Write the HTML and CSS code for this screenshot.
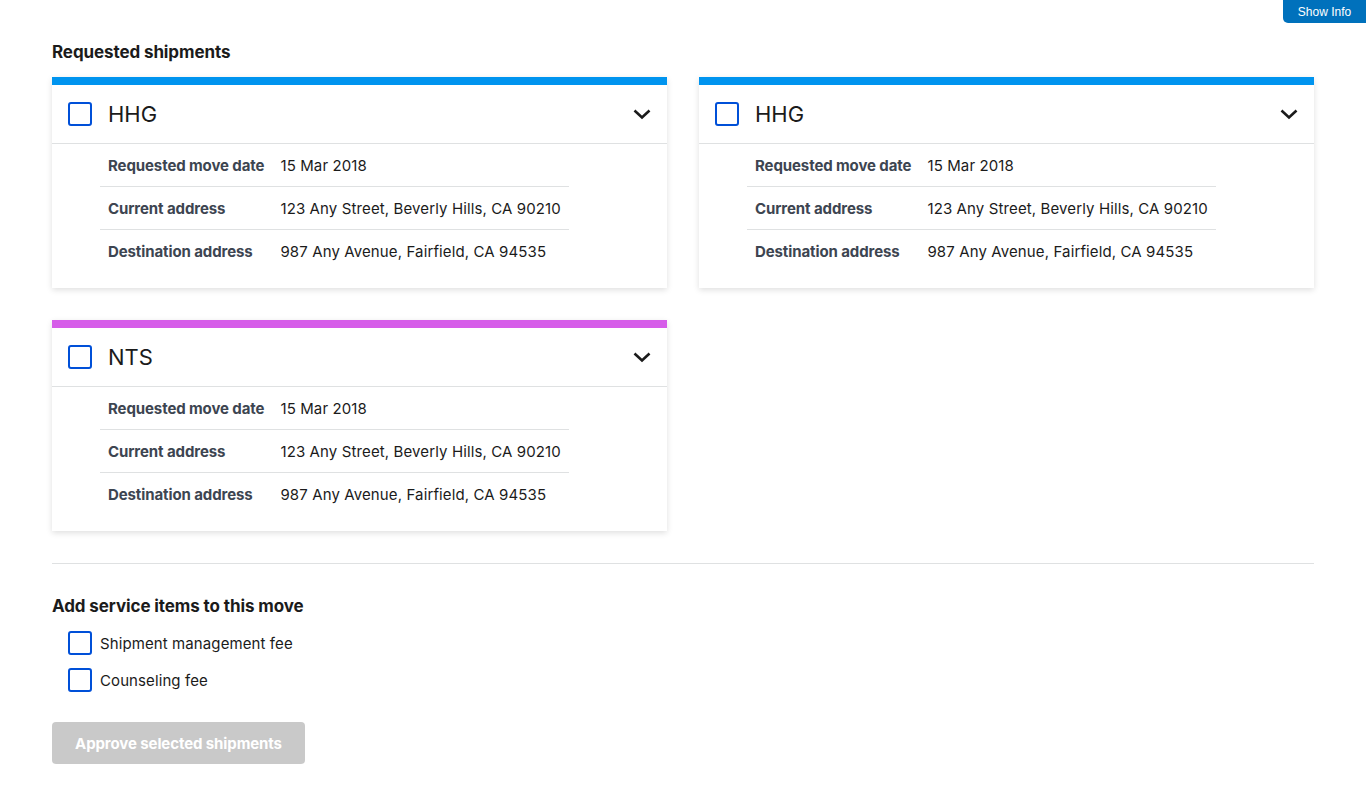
FILE: index.html
```html
<!DOCTYPE html>
<html lang="en">
<head>
<meta charset="utf-8">
<title>Requested shipments</title>
<link rel="stylesheet" href="styles.css">
</head>
<body>
<button class="show-info">Show Info</button>
<main class="page">
  <h2 class="section-title">Requested shipments</h2>
  <div class="cards">
    <section class="card card-hhg">
      <header class="card-head">
        <span class="checkbox"></span>
        <span class="card-title">HHG</span>
        <svg class="chevron" viewBox="0 0 18 12" width="18" height="12"><path d="M1.5 2.5 L9 9.5 L16.5 2.5" fill="none" stroke="#1b1b1b" stroke-width="2.6"/></svg>
      </header>
      <table class="details">
        <tr><th>Requested move date</th><td>15 Mar 2018</td></tr>
        <tr><th>Current address</th><td>123 Any Street, Beverly Hills, CA 90210</td></tr>
        <tr><th>Destination address</th><td>987 Any Avenue, Fairfield, CA 94535</td></tr>
      </table>
    </section>
    <section class="card card-hhg">
      <header class="card-head">
        <span class="checkbox"></span>
        <span class="card-title">HHG</span>
        <svg class="chevron" viewBox="0 0 18 12" width="18" height="12"><path d="M1.5 2.5 L9 9.5 L16.5 2.5" fill="none" stroke="#1b1b1b" stroke-width="2.6"/></svg>
      </header>
      <table class="details">
        <tr><th>Requested move date</th><td>15 Mar 2018</td></tr>
        <tr><th>Current address</th><td>123 Any Street, Beverly Hills, CA 90210</td></tr>
        <tr><th>Destination address</th><td>987 Any Avenue, Fairfield, CA 94535</td></tr>
      </table>
    </section>
    <section class="card card-nts">
      <header class="card-head">
        <span class="checkbox"></span>
        <span class="card-title">NTS</span>
        <svg class="chevron" viewBox="0 0 18 12" width="18" height="12"><path d="M1.5 2.5 L9 9.5 L16.5 2.5" fill="none" stroke="#1b1b1b" stroke-width="2.6"/></svg>
      </header>
      <table class="details">
        <tr><th>Requested move date</th><td>15 Mar 2018</td></tr>
        <tr><th>Current address</th><td>123 Any Street, Beverly Hills, CA 90210</td></tr>
        <tr><th>Destination address</th><td>987 Any Avenue, Fairfield, CA 94535</td></tr>
      </table>
    </section>
  </div>
  <hr class="divider">
  <h2 class="section-title service-title">Add service items to this move</h2>
  <ul class="service-list">
    <li class="service-item"><span class="checkbox"></span><span>Shipment management fee</span></li>
    <li class="service-item"><span class="checkbox"></span><span>Counseling fee</span></li>
  </ul>
  <button class="approve" disabled>Approve selected shipments</button>
</main>
</body>
</html>
```
FILE: styles.css
```css
html, body {
  margin: 0;
  padding: 0;
  background: #fff;
}
body {
  font-family: "Inter", "Open Sans", sans-serif;
  color: #1b1b1b;
  position: relative;
}
.show-info {
  position: absolute;
  top: 0;
  right: 0;
  width: 83px;
  height: 23px;
  border: 0;
  border-radius: 0 0 0 5px;
  background: #0071bc;
  color: #fff;
  font-family: "Liberation Sans", Arial, sans-serif;
  font-size: 12px;
  padding: 0;
}
.page {
  padding: 41px 52px 40px;
}
.section-title {
  margin: 0;
  font-size: 17px;
  font-weight: 700;
  line-height: 22px;
  letter-spacing: -0.1px;
}
.cards {
  margin-top: 14px;
  display: grid;
  grid-template-columns: 615px 615px;
  column-gap: 32px;
  row-gap: 32px;
}
.card {
  background: #fff;
  box-shadow: 0 2px 6px rgba(0,0,0,0.13);
  border-top: 8px solid #0094ef;
  padding-bottom: 16px;
}
.card-nts {
  border-top-color: #d65de9;
}
.card-head {
  display: flex;
  align-items: center;
  height: 58px;
  padding: 0 16px;
  border-bottom: 1px solid #dfe1e2;
}
.checkbox {
  display: inline-block;
  box-sizing: border-box;
  width: 24px;
  height: 24px;
  border: 2px solid #0050d8;
  border-radius: 3px;
  flex: none;
}
.card-title {
  margin-left: 16px;
  font-size: 22px;
  font-weight: 400;
  flex: 1;
}
.details {
  margin-left: 48px;
  border-collapse: collapse;
  font-size: 15px;
}
.details tr + tr {
  border-top: 1px solid #dfe1e2;
}
.details th {
  text-align: left;
  font-weight: 700;
  color: #3d4551;
  padding: 0 16px 0 8px;
  height: 42px;
  white-space: nowrap;
  letter-spacing: -0.1px;
}
.details td {
  padding: 0 8px 0 0;
  white-space: nowrap;
  letter-spacing: 0.12px;
}
.divider {
  margin: 32px 0 31px;
  border: 0;
  border-top: 1px solid #dfe1e2;
}
.service-list {
  list-style: none;
  margin: 14px 0 0;
  padding: 0 0 0 16px;
}
.service-item {
  display: flex;
  align-items: center;
  gap: 8px;
  height: 24px;
  margin-bottom: 13px;
  font-size: 15px;
  letter-spacing: 0.1px;
}
.approve {
  margin-top: 17px;
  width: 253px;
  height: 42px;
  border: 0;
  border-radius: 4px;
  background: #c9c9c9;
  color: #fff;
  font-family: "Inter", "Open Sans", sans-serif;
  font-size: 15px;
  font-weight: 700;
  letter-spacing: -0.1px;
}
```
